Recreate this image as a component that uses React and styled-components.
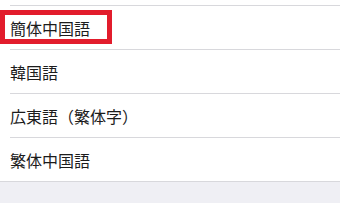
import React from "react";
import { createGlobalStyle, styled } from "styled-components";

const languages = ["簡体中国語", "韓国語", "広東語（繁体字）", "繁体中国語"];

export default function App() {
  return (
    <>
      <Global />
      <Screen>
        <TopCut />
        <List>
          {languages.map((name, i) => (
            <Row key={name}>
              <Label>{name}</Label>
              {i === 0 && <Highlight />}
            </Row>
          ))}
        </List>
        <Footer />
      </Screen>
    </>
  );
}

const Global = createGlobalStyle`
  html, body {
    margin: 0;
    padding: 0;
    background: #efeff4;
  }
  body {
    font-family: "Noto Sans CJK JP", "Noto Sans", sans-serif;
  }
`;

const Screen = styled.div`
  width: 340px;
  height: 203px;
  overflow: hidden;
  display: flex;
  flex-direction: column;
  background: #efeff4;
`;

const TopCut = styled.div`
  height: 5px;
  background: #fff;
`;

const List = styled.ul`
  margin: 0;
  padding: 0;
  list-style: none;
  background: #fff;
  border-bottom: 1px solid #d8d8dc;
`;

const Row = styled.li`
  position: relative;
  height: 44px;
  display: flex;
  align-items: center;
  padding-left: 10px;
  box-sizing: border-box;

  &::before {
    content: "";
    position: absolute;
    top: 0;
    left: 10px;
    right: 0;
    height: 1px;
    background: #d8d8dc;
  }
`;

const Label = styled.span`
  font-size: 16px;
  line-height: 1;
  color: #1c1c1c;
  padding-top: 1px;
`;

const Highlight = styled.div`
  position: absolute;
  left: 0;
  top: 5px;
  width: 112px;
  height: 34px;
  box-sizing: border-box;
  border: 5px solid #e21c2c;
`;

const Footer = styled.div`
  flex: 1;
  background: #efeff4;
`;
